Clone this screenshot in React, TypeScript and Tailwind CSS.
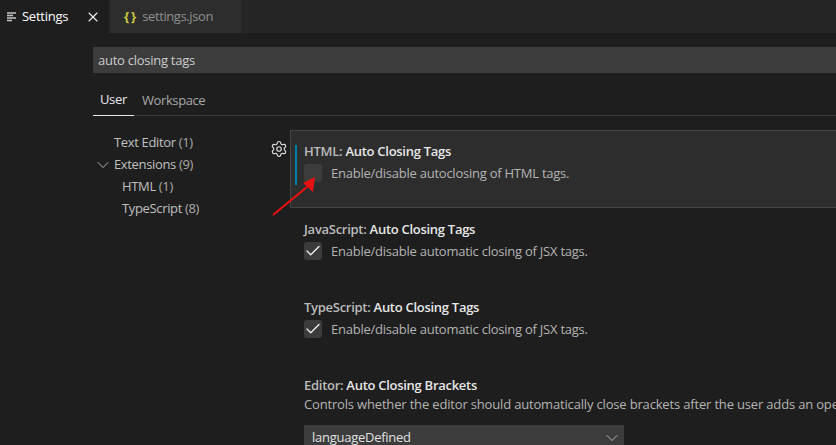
import React, { FC } from "react";
import { X, ChevronDown, Check, Settings as Gear } from "lucide-react";

const font = { fontFamily: '"Open Sans", "Noto Sans", sans-serif' };

const Setting: FC<{ scope: string; name: string; desc: string; checked: boolean; className?: string }> = ({ scope, name, desc, checked, className }) => (
    <div className={className}>
        <div className="text-[13px] leading-[18px] font-semibold text-[#cccccc] whitespace-nowrap tracking-[-0.28px]">
            <span className="text-[#bbbbbb]">{scope}: </span><span className="text-[#e7e7e7]">{name}</span>
        </div>
        <div className="flex items-center mt-[4px]">
            <div className="w-[18px] h-[18px] rounded-[3px] bg-[#3c3c3c] flex items-center justify-center shrink-0">
                {checked ? <Check size={18} strokeWidth={1.7} className="text-[#f0f0f0]" /> : null}
            </div>
            <div className="ml-[9px] text-[13px] leading-[18px] text-[#b4b4b4] whitespace-nowrap tracking-[-0.24px]">{desc}</div>
        </div>
    </div>
);

const TocItem: FC<{ label: string; count: string; className?: string }> = ({ label, count, className }) => (
    <div className={`h-[22px] flex items-center text-[13px] text-[#c0c0c0] whitespace-nowrap tracking-[-0.35px] ${className ?? ""}`}>
        {label}<span className="ml-[3px] text-[#aaaaaa]">{count}</span>
    </div>
);

export default function App() {
    return (
        <div className="relative w-[836px] h-[445px] overflow-hidden bg-[#1e1e1e] flex flex-col" style={font}>
            {/* tab bar */}
            <div className="h-[33px] bg-[#252526] flex shrink-0">
                <div className="w-[109px] bg-[#1e1e1e] flex items-center pl-[7px]">
                    <svg width="10" height="10" viewBox="0 0 10 10" className="shrink-0">
                        <path d="M0 1h9M0 3.5h6M0 6h9M0 8.5h5" stroke="#c5c5c5" strokeWidth="1.3" fill="none" />
                    </svg>
                    <span className="ml-[5px] text-[13px] text-[#ffffff] tracking-[-0.26px]">Settings</span>
                    <X size={16} strokeWidth={1.6} className="ml-[17px] text-[#f0f0f0]" />
                </div>
                <div className="ml-[1px] w-[131px] bg-[#2d2d2d] flex items-center pl-[14px]">
                    <span className="text-[13px] font-bold text-[#cbcb41] tracking-[2px]">{"{}"}</span>
                    <span className="ml-[4px] text-[13px] text-[#8f8f8f] tracking-[-0.4px]">settings.json</span>
                </div>
            </div>

            <div className="flex-1 pl-[93px] min-h-0">
                {/* search */}
                <div className="mt-[14px] h-[26px] bg-[#3c3c3c] flex items-center pl-[5px] pt-[1px] text-[13px] text-[#cccccc] tracking-[-0.26px]">
                    auto closing tags
                </div>

                {/* scope tabs */}
                <div className="mt-[16px] h-[27px] flex border-b border-[#3a3a3a] text-[13px] tracking-[-0.26px]">
                    <div className="w-[41px] h-[27px] border-b border-[#e7e7e7] text-[#e7e7e7] flex items-start justify-center pt-[1px]">User</div>
                    <div className="ml-[8px] text-[#a8a8a8] pt-[2px] tracking-[-0.4px]">Workspace</div>
                </div>

                <div className="flex mt-[14px]">
                    {/* table of contents */}
                    <div className="w-[197px] shrink-0 pt-[2px]">
                        <TocItem label="Text Editor" count="(1)" className="pl-[21px]" />
                        <div className="flex items-center">
                            <ChevronDown size={20} strokeWidth={1} className="text-[#d0d0d0] shrink-0" />
                            <TocItem label="Extensions" count="(9)" className="ml-[1px]" />
                        </div>
                        <TocItem label="HTML" count="(1)" className="pl-[29px]" />
                        <TocItem label="TypeScript" count="(8)" className="pl-[29px]" />
                    </div>

                    {/* settings list */}
                    <div className="flex-1 min-w-0">
                        <div className="relative h-[78px] -mr-[2px] bg-[#2d2d2d] border border-[#454545] pl-[13px] pt-[11px]">
                            <div className="absolute left-[4px] top-[14px] w-[2px] h-[40px] bg-[#007fa8]" />
                            <div className="absolute -left-[21px] top-[9px]">
                                <Gear size={18} strokeWidth={1.5} className="text-[#e0e0e0]" />
                            </div>
                            <Setting scope="HTML" name="Auto Closing Tags" desc="Enable/disable autoclosing of HTML tags." checked={false} />
                        </div>
                        <Setting className="pl-[14px] mt-[12px]" scope="JavaScript" name="Auto Closing Tags" desc="Enable/disable automatic closing of JSX tags." checked />
                        <Setting className="pl-[14px] mt-[38px]" scope="TypeScript" name="Auto Closing Tags" desc="Enable/disable automatic closing of JSX tags." checked />
                        <div className="pl-[14px] mt-[38px]">
                            <div className="text-[13px] leading-[18px] font-semibold whitespace-nowrap tracking-[-0.28px]">
                                <span className="text-[#bbbbbb]">Editor: </span><span className="text-[#e7e7e7]">Auto Closing Brackets</span>
                            </div>
                            <div className="mt-[1px] text-[13px] leading-[18px] text-[#b4b4b4] whitespace-nowrap tracking-[-0.17px]">
                                Controls whether the editor should automatically close brackets after the user adds an opening bracket.
                            </div>
                            <div className="mt-[12px] w-[320px] h-[26px] bg-[#3c3c3c] flex items-center justify-between pl-[8px] pr-[2px] text-[13px] text-[#e0e0e0] tracking-[-0.26px]">
                                languageDefined
                                <ChevronDown size={20} strokeWidth={1} className="text-[#d0d0d0]" />
                            </div>
                        </div>
                    </div>
                </div>
            </div>

            {/* annotation arrow */}
            <svg className="absolute left-[270px] top-[175px]" width="50" height="45" viewBox="0 0 50 45">
                <path d="M3 40L37 12" stroke="#e81010" strokeWidth="2.2" fill="none" />
                <path d="M45 2L33 8L43 17Z" fill="#e81010" />
            </svg>
        </div>
    );
}
